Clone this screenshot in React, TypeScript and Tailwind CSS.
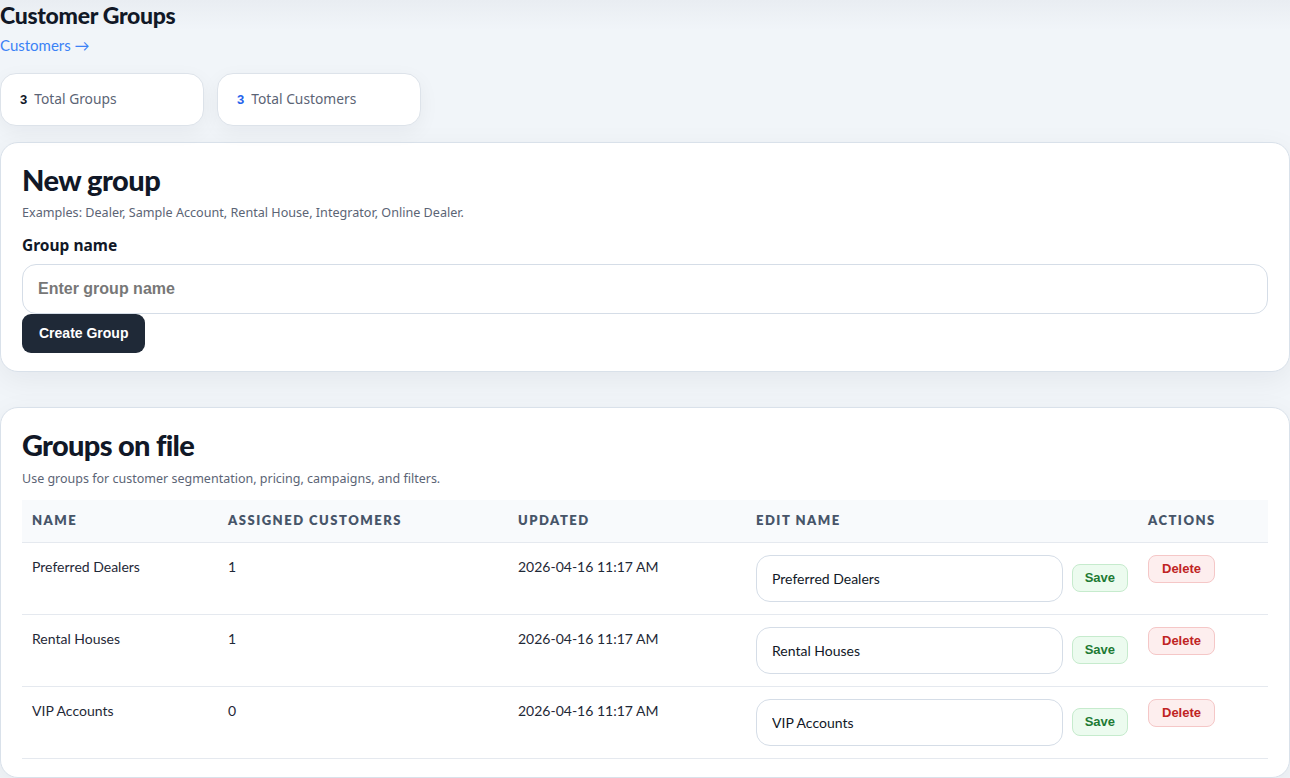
import React from "react";

const groups = [
  { name: "Preferred Dealers", assigned: 1, updated: "2026-04-16 11:17 AM" },
  { name: "Rental Houses", assigned: 1, updated: "2026-04-16 11:17 AM" },
  { name: "VIP Accounts", assigned: 0, updated: "2026-04-16 11:17 AM" },
];

const sans = "font-['Lato','Noto_Sans',sans-serif]";
const noto = "font-['Noto_Sans',sans-serif]";
const arial = "font-['Liberation_Sans',Arial,sans-serif]";

export default function App() {
  return (
    <div className={`min-h-[778px] bg-[#f1f5f9] ${sans} text-[#0f172a]`}>
      <div className="bg-gradient-to-b from-[#e9edf2] to-[#f1f5f9] h-[30px] -mb-[30px]" />
      <div className="relative pt-[1px]">
        {/* Header */}
        <h1 className="text-[23px] leading-[28px] font-black tracking-[-0.3px] text-[#111827]">
          Customer Groups
        </h1>
        <a className="block mt-[6px] text-[15px] leading-[20px] text-[#3b82f6]">
          Customers →
        </a>

        {/* Stats */}
        <div className="flex gap-[13px] mt-[18px]">
          <div className="w-[204px] h-[53px] bg-white rounded-2xl border border-[#dde3ea] shadow-[0_6px_20px_rgba(15,23,42,0.05)] flex items-center px-[19px] gap-[7px]">
            <span className={`${arial} font-bold text-[13px] text-[#111827]`}>3</span>
            <span className={`${noto} text-[13.8px] text-[#5b6475]`}>Total Groups</span>
          </div>
          <div className="w-[204px] h-[53px] bg-white rounded-2xl border border-[#dde3ea] shadow-[0_6px_20px_rgba(15,23,42,0.05)] flex items-center px-[19px] gap-[7px]">
            <span className={`${arial} font-bold text-[13px] text-[#2563eb]`}>3</span>
            <span className={`${noto} text-[13.8px] text-[#5b6475]`}>Total Customers</span>
          </div>
        </div>

        {/* New group */}
        <section className="mt-[16px] bg-white rounded-[18px] border border-[#d9e1ea] shadow-[0_8px_30px_rgba(15,23,42,0.06)] px-[21px] pt-[20px] pb-[18px]">
          <h2 className="text-[29px] leading-[34px] font-black tracking-[-0.5px] text-[#111827]">
            New group
          </h2>
          <p className={`mt-[8px] ${noto} text-[12.6px] leading-[16px] text-[#5b6475]`}>
            Examples: Dealer, Sample Account, Rental House, Integrator, Online Dealer.
          </p>
          <label className={`block mt-[14px] ${noto} text-[15.5px] leading-[20px] font-bold text-[#111827]`}>
            Group name
          </label>
          <input
            placeholder="Enter group name"
            className={`mt-[9px] block w-full h-[50px] rounded-[14px] border border-[#d5dde7] px-[15px] ${arial} font-bold text-[16px] placeholder:text-[#777777] outline-none`}
          />
          <button
            className={`block h-[39px] px-[17px] rounded-[9px] bg-[#1f2937] text-white ${arial} font-bold text-[14px]`}
          >
            Create Group
          </button>
        </section>

        {/* Groups on file */}
        <section className="mt-[35px] bg-white rounded-[18px] border border-[#d9e1ea] shadow-[0_8px_30px_rgba(15,23,42,0.06)] px-[21px] pt-[20px] pb-[18px]">
          <h2 className="text-[29px] leading-[34px] font-black tracking-[-0.7px] text-[#111827]">
            Groups on file
          </h2>
          <p className={`mt-[9px] ${noto} text-[12.5px] leading-[16px] text-[#5b6475]`}>
            Use groups for customer segmentation, pricing, campaigns, and filters.
          </p>

          <table className="mt-[13px] w-full table-fixed border-collapse">
            <colgroup>
              <col className="w-[196px]" />
              <col className="w-[290px]" />
              <col className="w-[238px]" />
              <col className="w-[392px]" />
              <col />
            </colgroup>
            <thead>
              <tr className="bg-[#f8fafc] border-b border-[#e5e9ef]">
                {["Name", "Assigned Customers", "Updated", "Edit Name", "Actions"].map((h) => (
                  <th
                    key={h}
                    className="h-[42px] px-[10px] text-left text-[13px] font-extrabold uppercase tracking-[1.5px] text-[#475569]"
                  >
                    {h}
                  </th>
                ))}
              </tr>
            </thead>
            <tbody>
              {groups.map((g) => (
                <tr key={g.name} className="border-b border-[#e5e9ef] align-top">
                  <td className="px-[10px] pt-[13px] h-[72px] text-[14px] text-[#1f2937]">{g.name}</td>
                  <td className="px-[10px] pt-[13px] text-[14px] text-[#1f2937]">{g.assigned}</td>
                  <td className="px-[10px] pt-[13px] text-[14px] text-[#1f2937]">{g.updated}</td>
                  <td className="px-[10px] pt-[12px]">
                    <div className="flex items-center gap-[9px]">
                      <input
                        defaultValue={g.name}
                        className="w-[307px] h-[47px] rounded-[14px] border border-[#d5dde7] px-[15px] text-[14px] text-[#111827] outline-none"
                      />
                      <button
                        className={`h-[28px] px-[12px] rounded-[8px] bg-[#ecfbef] border border-[#c6ebcd] text-[#1e7a34] ${arial} font-bold text-[13px]`}
                      >
                        Save
                      </button>
                    </div>
                  </td>
                  <td className="px-[10px] pt-[12px]">
                    <button
                      className={`h-[28px] px-[13px] rounded-[8px] bg-[#fdeeee] border border-[#f5c7c7] text-[#c02424] ${arial} font-bold text-[13px]`}
                    >
                      Delete
                    </button>
                  </td>
                </tr>
              ))}
            </tbody>
          </table>
        </section>
      </div>
    </div>
  );
}
